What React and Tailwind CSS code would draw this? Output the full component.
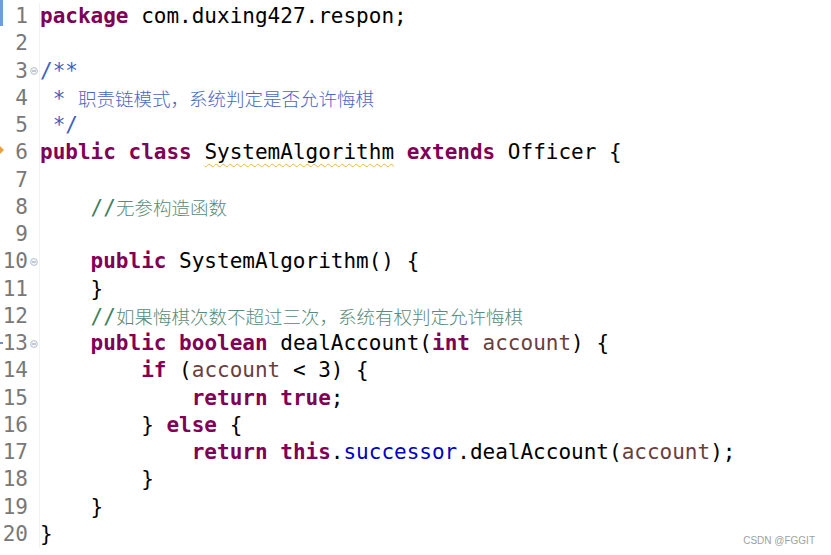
const K = 'kw';
const lines = [
  [['package', K], [' com.duxing427.respon;']],
  [],
  [['/**', 'doc']],
  [[' * ', 'doc'], ['职责链模式，系统判定是否允许悔棋', 'doccn']],
  [[' */', 'doc']],
  [['public', K], [' '], ['class', K], [' '], ['SystemAlgorithm', 'warn'], [' '], ['extends', K], [' Officer {']],
  [],
  [['    '], ['//', 'cm'], ['无参构造函数', 'cmcn']],
  [],
  [['    '], ['public', K], [' SystemAlgorithm() {']],
  [['    }']],
  [['    '], ['//', 'cm'], ['如果悔棋次数不超过三次，系统有权判定允许悔棋', 'cmcn']],
  [['    '], ['public', K], [' '], ['boolean', K], [' dealAccount('], ['int', K], [' '], ['account', 'var'], [') {']],
  [['        '], ['if', K], [' ('], ['account', 'var'], [' < 3) {']],
  [['            '], ['return', K], [' '], ['true', K], [';']],
  [['        } '], ['else', K], [' {']],
  [['            '], ['return', K], [' '], ['this', K], ['.'], ['successor', 'field'], ['.dealAccount('], ['account', 'var'], [');']],
  [['        }']],
  [['    }']],
  [['}']],
];

const folds = [3, 10, 13];

const styles = {
  kw: 'font-bold text-[#7f0055]',
  doc: 'text-[#3f5fbf]',
  doccn: "text-[#4b66c4] text-[18.5px] font-['Noto_Sans_CJK_SC',sans-serif] font-light",
  cm: 'text-[#3f7f5f]',
  cmcn: "text-[#5a8a78] text-[18.5px] font-['Noto_Sans_CJK_SC',sans-serif] font-light",
  var: 'text-[#6a3e3e]',
  field: 'text-[#0000c0]',
  warn: 'underline decoration-wavy decoration-[#e8b440] decoration-1 underline-offset-[4px]',
};

const FoldMark = () => (
  <svg width="8" height="8" viewBox="0 0 8 8" className="shrink-0">
    <circle cx="4" cy="4" r="3.4" fill="#f4f6fa" stroke="#a8b0c0" strokeWidth="0.8" />
    <line x1="2" y1="4" x2="6" y2="4" stroke="#8890a0" strokeWidth="0.9" />
  </svg>
);

export default function App() {
  return (
    <div className="relative w-[831px] h-[555px] bg-white overflow-hidden font-['DejaVu_Sans_Mono',monospace] text-[21px] text-black">
      {/* left ruler marks */}
      <div className="absolute left-0 top-0 w-[3px] h-[26px] bg-[#6f9fd8]" />
      <div className="absolute left-0 top-[146px] w-0 h-0 border-y-[4px] border-y-transparent border-l-[4px] border-l-[#e8a040]" />
      <div className="absolute left-0 top-[342px] w-[3px] h-[2px] bg-[#6f8fd0]" />

      <div className="pt-[3px]">
        {lines.map((tokens, i) => {
          const n = i + 1;
          return (
            <div key={n} className="flex h-[27.25px] leading-[27.25px]">
              <div className="flex items-center w-[40px] shrink-0 border-r border-[#f2f2f2] mr-0">
                <span className="w-[29px] text-right text-[#787878] pr-[1px]">{n}</span>
                <span className="w-[10px] flex items-center justify-center">
                  {folds.includes(n) && <FoldMark />}
                </span>
              </div>
              <div className="whitespace-pre">
                {tokens.map(([text, type], j) => (
                  <span key={j} className={type ? styles[type] : ''}>{text}</span>
                ))}
              </div>
            </div>
          );
        })}
      </div>

      <div className="absolute right-[16px] bottom-[7px] text-[10px] text-[#a0a0a0] font-['Liberation_Sans',sans-serif]">
        CSDN @FGGIT
      </div>
    </div>
  );
}
